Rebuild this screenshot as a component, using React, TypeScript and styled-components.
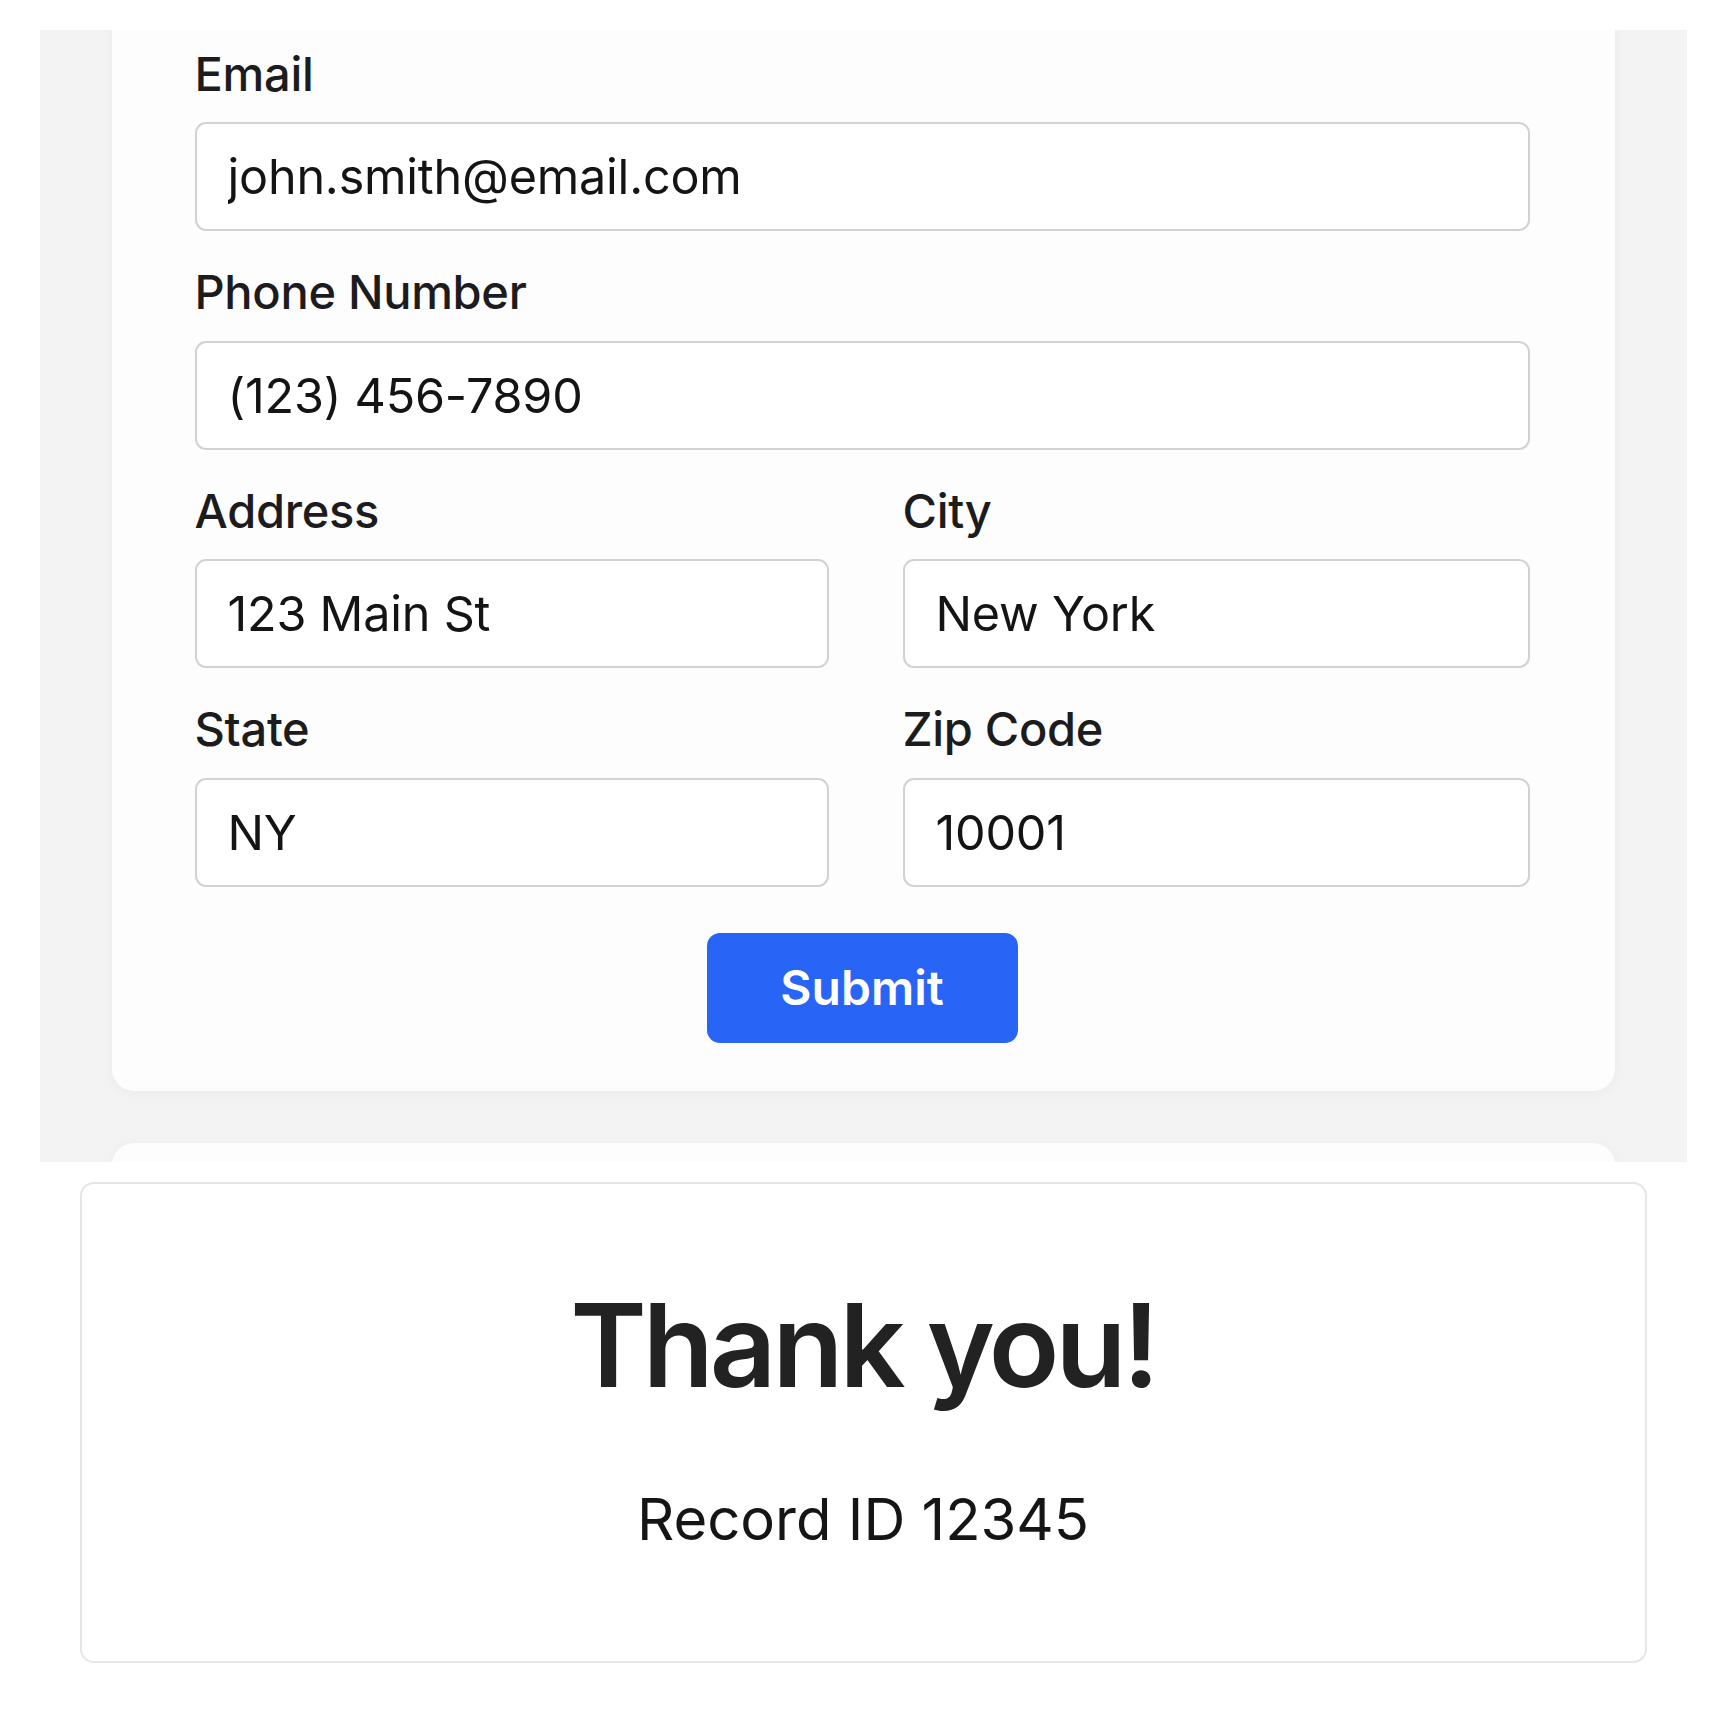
import styled, { createGlobalStyle } from 'styled-components';

const GlobalStyle = createGlobalStyle`
  * {
    box-sizing: border-box;
  }
  body {
    margin: 0;
    background: #ffffff;
    font-family: Inter, 'Noto Sans', 'Liberation Sans', sans-serif;
    color: #1c1c1e;
  }
`;

type Field = { label: string; value: string };

const fullRows: Field[] = [
  { label: 'Email', value: 'john.smith@email.com' },
  { label: 'Phone Number', value: '(123) 456-7890' },
];

const pairRows: Field[][] = [
  [
    { label: 'Address', value: '123 Main St' },
    { label: 'City', value: 'New York' },
  ],
  [
    { label: 'State', value: 'NY' },
    { label: 'Zip Code', value: '10001' },
  ],
];

const FormField = ({ label, value }: Field) => (
  <FieldGroup>
    <Label>{label}</Label>
    <Input type="text" defaultValue={value} readOnly />
  </FieldGroup>
);

const App = () => {
  return (
    <>
      <GlobalStyle />
      <Page>
        <Viewport>
          <FormCard>
            <Form onSubmit={(e) => e.preventDefault()}>
              {fullRows.map((f) => (
                <FormField key={f.label} {...f} />
              ))}
              {pairRows.map((row) => (
                <TwoColumns key={row[0].label}>
                  {row.map((f) => (
                    <FormField key={f.label} {...f} />
                  ))}
                </TwoColumns>
              ))}
              <SubmitRow>
                <SubmitButton type="submit">Submit</SubmitButton>
              </SubmitRow>
            </Form>
          </FormCard>
          <NextCard />
        </Viewport>
        <ResultCard>
          <ThankYou>Thank you!</ThankYou>
          <RecordId>Record ID 12345</RecordId>
        </ResultCard>
      </Page>
    </>
  );
};

export default App;

const Page = styled.div`
  width: 1726px;
  padding-top: 30px;
  display: flex;
  flex-direction: column;
  align-items: center;
  gap: 20px;
`;

const Viewport = styled.div`
  width: 1647px;
  height: 1132px;
  overflow: hidden;
  background: #f3f3f3;
  padding: 0 72px;
  display: flex;
  flex-direction: column;
  gap: 52px;
`;

const FormCard = styled.div`
  margin-top: -40px;
  padding: 56px 85px 48px 83px;
  background: #fdfdfd;
  border-radius: 22px;
  box-shadow: 0 2px 14px rgba(0, 0, 0, 0.035);
`;

const NextCard = styled.div`
  flex-shrink: 0;
  height: 200px;
  background: #fdfdfd;
  border-radius: 22px;
  box-shadow: 0 2px 14px rgba(0, 0, 0, 0.035);
`;

const Form = styled.form`
  display: flex;
  flex-direction: column;
  gap: 33px;
`;

const TwoColumns = styled.div`
  display: grid;
  grid-template-columns: 634px 1fr;
  column-gap: 74px;
`;

const FieldGroup = styled.div`
  display: flex;
  flex-direction: column;
  gap: 20px;
`;

const Label = styled.label`
  font-size: 47px;
  line-height: 1.2;
  font-weight: 500;
  letter-spacing: -0.3px;
  color: #1c1c1e;
`;

const Input = styled.input`
  width: 100%;
  height: 109px;
  padding: 0 31px;
  border: 2px solid #d2d2d2;
  border-radius: 11px;
  background: #ffffff;
  font-family: Inter, 'Noto Sans', 'Liberation Sans', sans-serif;
  font-size: 48.5px;
  letter-spacing: -0.2px;
  color: #141414;
  outline: none;
`;

const SubmitRow = styled.div`
  display: flex;
  justify-content: center;
  padding-top: 13px;
`;

const SubmitButton = styled.button`
  width: 311px;
  height: 110px;
  border: none;
  border-radius: 13px;
  background: #2864f5;
  color: #ffffff;
  font-family: Inter, 'Noto Sans', 'Liberation Sans', sans-serif;
  font-size: 48px;
  font-weight: 600;
  cursor: pointer;
`;

const ResultCard = styled.div`
  width: 1567px;
  padding: 92px 0 106px;
  border: 2px solid #e6e6e6;
  border-radius: 14px;
  background: #ffffff;
  display: flex;
  flex-direction: column;
  align-items: center;
  gap: 70px;
`;

const ThankYou = styled.h1`
  margin: 0;
  font-size: 116px;
  line-height: 1.2;
  font-weight: 600;
  letter-spacing: -4px;
  color: #222222;
`;

const RecordId = styled.p`
  margin: 0;
  font-size: 58px;
  line-height: 1.2;
  font-weight: 400;
  color: #151515;
`;
